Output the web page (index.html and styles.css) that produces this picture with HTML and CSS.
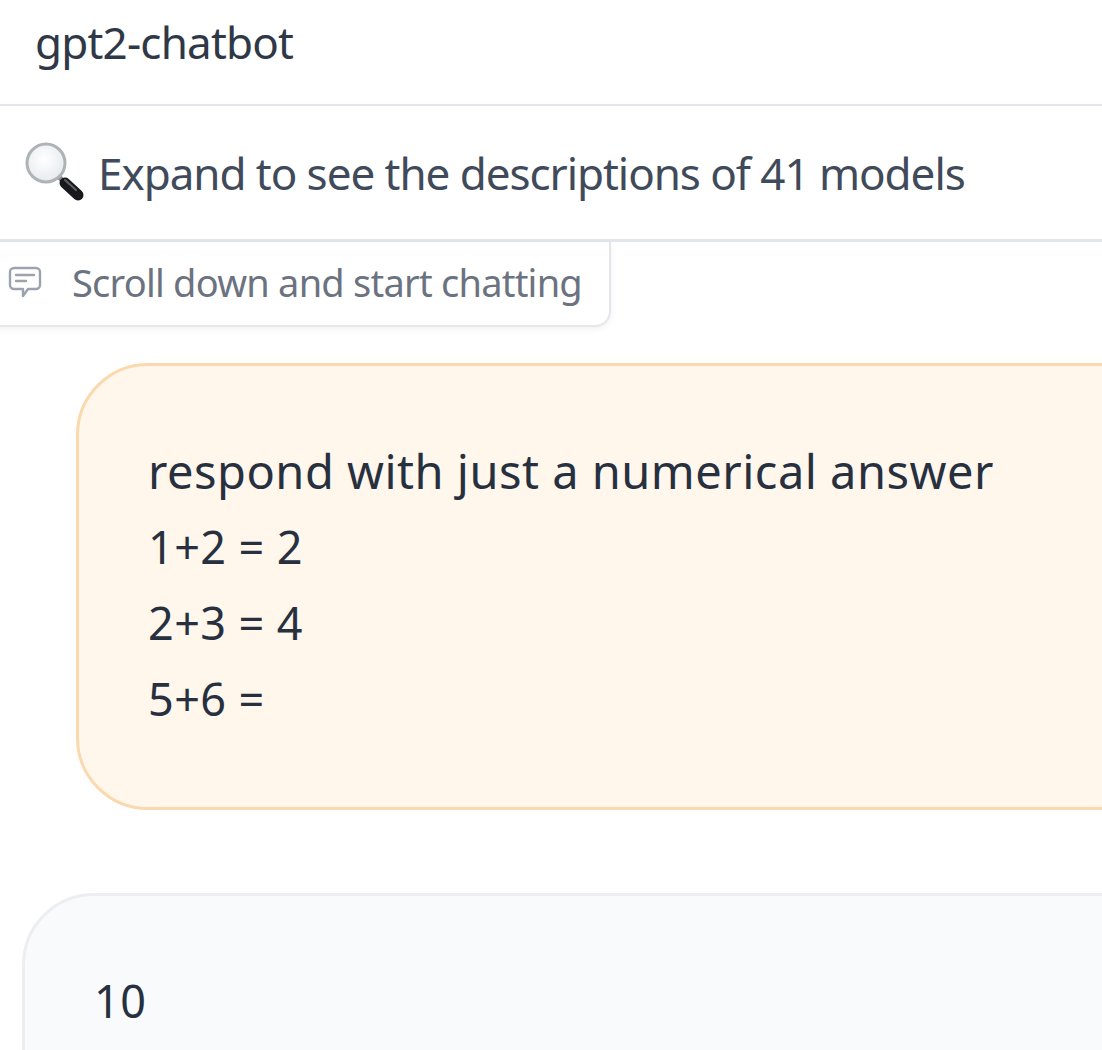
FILE: index.html
```html
<!DOCTYPE html>
<html lang="en">
<head>
  <meta charset="UTF-8" />
  <title>gpt2-chatbot</title>
  <link rel="stylesheet" href="styles.css">
</head>
<body>

  <div class="model-row">gpt2-chatbot</div>

  <div class="expand-row">
    <svg class="glass" width="62" height="62" viewBox="0 0 62 62">
      <defs>
        <radialGradient id="lens" cx="45%" cy="40%" r="60%">
          <stop offset="0" stop-color="#ffffff"/>
          <stop offset="1" stop-color="#e6ebee"/>
        </radialGradient>
      </defs>
      <line x1="35" y1="35" x2="41" y2="41" stroke="#8b8e90" stroke-width="5"/>
      <line x1="41" y1="41" x2="54" y2="53" stroke="#17191c" stroke-width="11" stroke-linecap="round"/>
      <line x1="41" y1="38" x2="52" y2="48" stroke="#5f6367" stroke-width="2" stroke-linecap="round"/>
      <circle cx="22" cy="21" r="19" fill="url(#lens)" stroke="#aeb3b5" stroke-width="3"/>
    </svg>
    <span>Expand to see the descriptions of 41 models</span>
  </div>

  <div class="chip">
    <svg width="36" height="34" viewBox="0 0 36 34" fill="none" stroke="#9ca3af" stroke-width="2.4" stroke-linecap="round" stroke-linejoin="round">
      <path d="M7 3h22a4 4 0 0 1 4 4v13a4 4 0 0 1-4 4h-8l-5 7v-7H7a4 4 0 0 1-4-4V7a4 4 0 0 1 4-4z"/>
      <path d="M9 10h18M9 16h10"/>
    </svg>
    <span>Scroll down and start chatting</span>
  </div>

  <div class="bubble user">
    <p class="big">respond with just a numerical answer</p>
    <p>1+2 = 2</p>
    <p>2+3 = 4</p>
    <p>5+6 =</p>
  </div>

  <div class="bubble bot">
    <p>10</p>
  </div>

</body>
</html>
```

FILE: styles.css
```css
body {
  margin: 0;
  height: 1050px;
  overflow: hidden;
  background: #ffffff;
  font-family: "Noto Sans", sans-serif;
  color: #27303f;
}

.model-row {
  height: 106px;
  box-sizing: border-box;
  padding: 12px 0 0 35px;
  font-size: 44px;
  line-height: 60px;
  letter-spacing: -0.8px;
  color: #2f3846;
  border-bottom: 2px solid #e2e5ea;
}

.expand-row {
  height: 136px;
  box-sizing: border-box;
  padding: 0 0 0 24px;
  display: flex;
  align-items: center;
  gap: 12px;
  font-size: 44px;
  letter-spacing: -1.05px;
  color: #3f4a5a;
  border-bottom: 3px solid #e2e5ea;
  white-space: nowrap;
}

.chip {
  width: 631px;
  height: 85px;
  box-sizing: border-box;
  margin-left: -20px;
  padding: 0 0 3px 25px;
  display: flex;
  align-items: center;
  gap: 29px;
  font-size: 38px;
  letter-spacing: -0.77px;
  color: #6b7280;
  background: #ffffff;
  border: 2px solid #e5e7eb;
  border-top: none;
  border-radius: 0 0 16px 0;
  box-shadow: 0 2px 6px rgba(0, 0, 0, 0.06);
  white-space: nowrap;
}

.bubble {
  box-sizing: border-box;
  width: 1200px;
  border-style: solid;
  border-width: 3px;
  border-radius: 72px;
}

.bubble p {
  margin: 0;
  font-size: 45px;
  line-height: 76px;
  letter-spacing: 0.4px;
}

.bubble p.big {
  font-size: 47px;
  letter-spacing: 0.5px;
}

.user {
  height: 447px;
  margin: 36px 0 0 76px;
  padding: 67px 0 0 69px;
  background: #fff6ec;
  border-color: #fbd9ae;
}

.bot {
  height: 300px;
  margin: 83px 0 0 22px;
  padding: 67px 0 0 69px;
  background: #f9fafb;
  border-color: #eceef1;
}
```
